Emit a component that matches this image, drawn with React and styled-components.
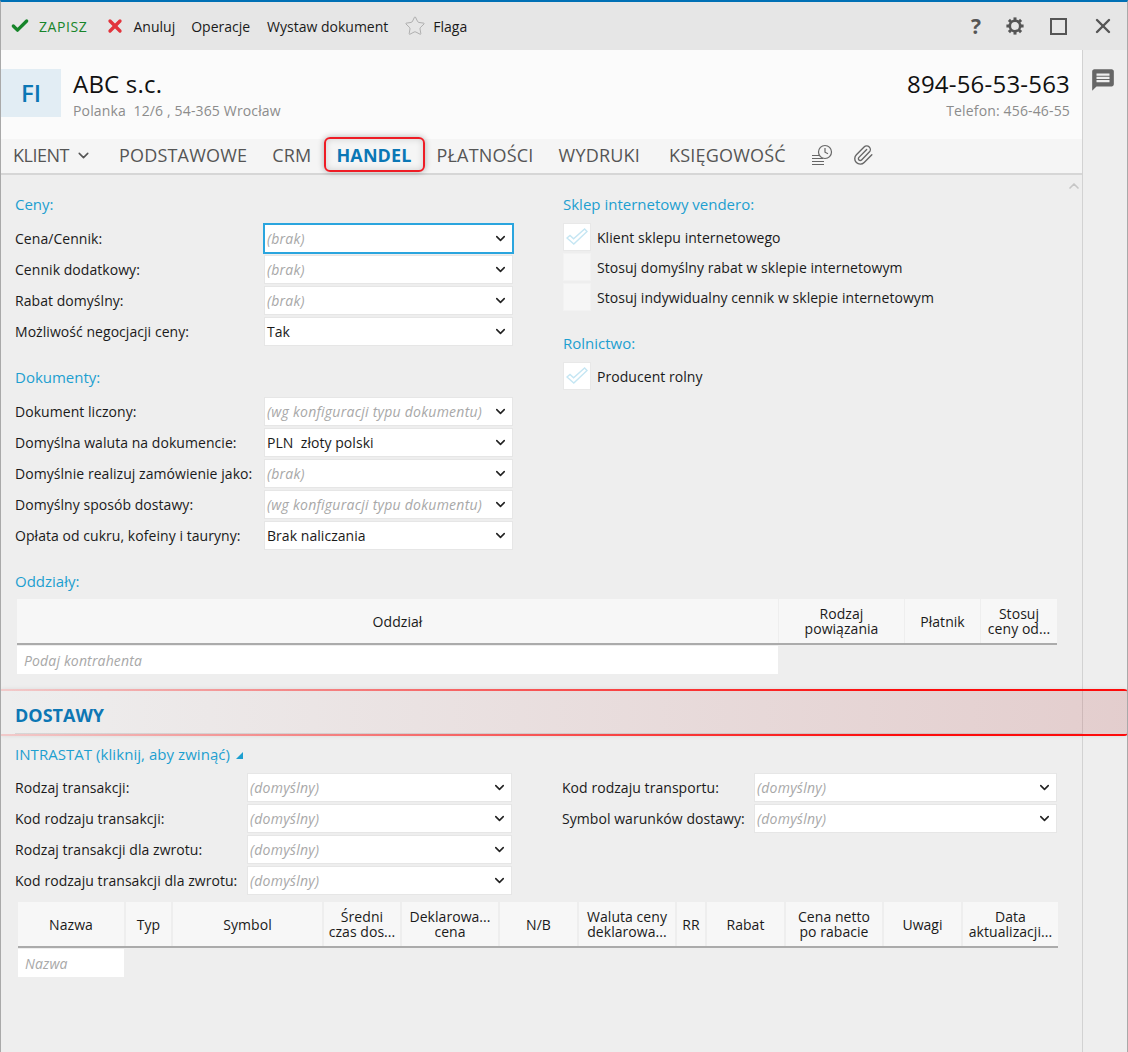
import React from "react";
import styled, { createGlobalStyle } from "styled-components";
import { Check, X, Star, ChevronDown, ChevronUp, Paperclip } from "lucide-react";
import { MdMessage } from "react-icons/md";

const GlobalStyle = createGlobalStyle`
  html, body {
    margin: 0;
    padding: 0;
    background: #eeeeee;
  }
  * {
    box-sizing: border-box;
  }
`;

const Window = styled.div`
  width: 1128px;
  height: 1052px;
  display: flex;
  flex-direction: column;
  overflow: hidden;
  background: #eeeeee;
  border-top: 2px solid #0070b5;
  border-left: 1px solid #a9a9a9;
  border-right: 1px solid #a9a9a9;
  font-family: "Open Sans", "Noto Sans", sans-serif;
  font-size: 14px;
  letter-spacing: 0.05px;
  color: #1a1a1a;
`;

const Toolbar = styled.div`
  height: 48px;
  flex: none;
  display: flex;
  align-items: center;
  padding: 0 12px 0 9px;
  background: #e6e6e6;
`;

const ToolButton = styled.div`
  display: flex;
  align-items: center;
  gap: ${(p) => p.$gap || 0}px;
  margin-right: ${(p) => p.$right || 16}px;
  color: ${(p) => p.$color || "#1a1a1a"};
  letter-spacing: ${(p) => p.$spacing || 0}px;
`;

const ToolSpacer = styled.div`
  flex: 1;
`;

const WindowIcon = styled.div`
  width: 24px;
  height: 24px;
  margin-left: ${(p) => p.$left || 0}px;
  display: flex;
  align-items: center;
  justify-content: center;
  color: #555555;
  font-size: 21px;
  font-weight: 700;
`;

const MaximizeBox = styled.div`
  width: 17px;
  height: 17px;
  border: 2px solid #555555;
`;

const Body = styled.div`
  flex: 1;
  display: flex;
  min-height: 0;
`;

const Main = styled.div`
  width: 1081px;
  flex: none;
`;

const Sidebar = styled.div`
  flex: 1;
  border-left: 1px solid #d2d2d2;
  padding: 17px 0 0 7px;
  color: #666666;
`;

const Header = styled.div`
  height: 89px;
  display: flex;
  align-items: flex-start;
  padding: 19px 12px 0 0;
  background: #fbfbfb;
`;

const Avatar = styled.div`
  width: 60px;
  height: 48px;
  padding-bottom: 2px;
  display: flex;
  align-items: center;
  justify-content: center;
  background: #e2edf4;
  color: #0b77b5;
  font-size: 24px;
  font-weight: 600;
`;

const Company = styled.div`
  flex: 1;
  margin-left: 12px;
`;

const HeaderRight = styled.div`
  text-align: right;
`;

const BigText = styled.div`
  font-size: 24px;
  line-height: 30px;
  letter-spacing: 0.2px;
  color: #111111;
`;

const SubText = styled.div`
  font-size: 14px;
  line-height: 20px;
  margin-top: 2px;
  letter-spacing: 0.15px;
  color: #8c8c8c;
  white-space: pre;
`;

const Tabs = styled.div`
  height: 36px;
  display: flex;
  align-items: center;
  padding: 0 0 2px 12px;
  background: #f5f5f5;
  border-bottom: 2px solid #d6d6d6;
  font-size: 18px;
  letter-spacing: 0.2px;
`;

const Tab = styled.div`
  position: relative;
  display: flex;
  align-items: center;
  gap: 6px;
  margin-right: ${(p) => p.$right || 25}px;
  color: ${(p) => (p.$active ? "#0b77b5" : "#555555")};
  font-weight: ${(p) => (p.$active ? 700 : 400)};
  letter-spacing: ${(p) => (p.$active ? "0.1px" : "inherit")};

  ${(p) =>
    p.$active &&
    `
    &::after {
      content: "";
      position: absolute;
      left: -12px;
      right: -14px;
      top: -6px;
      bottom: -5px;
      border: 2px solid #ee1c25;
      border-radius: 6px;
      box-shadow: 0 0 6px rgba(0, 0, 0, 0.3), inset 0 0 7px rgba(0, 0, 0, 0.15);
    }
  `}
`;

const TabLabel = styled.span`
  letter-spacing: -0.5px;
`;

const TabIcon = styled.div`
  display: flex;
  margin-right: ${(p) => p.$right || 20}px;
  color: #666666;
`;

const Content = styled.div`
  position: relative;
  padding: 19px 0 0 14px;
`;

const ScrollUp = styled.div`
  position: absolute;
  right: 0;
  top: 3px;
  color: #c6c6c6;
`;

const Columns = styled.div`
  display: flex;
  gap: 50px;
`;

const Column = styled.div`
  width: ${(p) => p.$width}px;
`;

const Heading = styled.div`
  height: 20px;
  line-height: 20px;
  margin-top: ${(p) => p.$top || 0}px;
  margin-bottom: ${(p) => p.$bottom ?? 10}px;
  color: #1d9fd0;
  font-size: 15px;
  letter-spacing: 0;
`;

const Row = styled.div`
  display: grid;
  grid-template-columns: ${(p) => p.$label}px 1fr;
  align-items: center;
  height: 29px;
  margin-bottom: 2px;
  white-space: nowrap;
`;

const SelectBox = styled.div`
  height: 29px;
  display: flex;
  align-items: center;
  justify-content: space-between;
  padding: 0 4px 0 2px;
  background: #ffffff;
  border: 1px solid ${(p) => (p.$focused ? "#2aa5de" : "#e6e6e6")};
  box-shadow: ${(p) => (p.$focused ? "0 0 0 1px #2aa5de" : "none")};
  color: ${(p) => (p.$muted ? "#a8a8a8" : "#1a1a1a")};
  font-style: ${(p) => (p.$muted ? "italic" : "normal")};
  letter-spacing: ${(p) => (p.$muted ? "0.25px" : "inherit")};
  white-space: pre;
`;

const CheckRow = styled.div`
  display: flex;
  align-items: center;
  gap: 6px;
  height: 28px;
  margin-bottom: 2px;
  white-space: nowrap;
`;

const CheckBox = styled.div`
  width: 28px;
  height: 28px;
  display: flex;
  align-items: center;
  justify-content: center;
  background: ${(p) => (p.$checked ? "#ffffff" : "#f6f6f6")};
  border: 1px solid ${(p) => (p.$checked ? "#e8e8e8" : "#f2f2f2")};
`;

const TableHead = styled.div`
  display: grid;
  grid-template-columns: ${(p) => p.$columns};
  gap: ${(p) => p.$gap}px;
  width: ${(p) => p.$width}px;
  margin-left: ${(p) => p.$left}px;
  margin-top: ${(p) => p.$top}px;
  border-bottom: 2px solid #ababab;
`;

const HeadCell = styled.div`
  height: 44px;
  display: flex;
  align-items: center;
  justify-content: center;
  background: #f7f7f7;
  text-align: center;
  line-height: 15px;
  white-space: pre-line;
`;

const FilterCell = styled.div`
  width: ${(p) => p.$width}px;
  height: 28px;
  margin: 1px 0 0 ${(p) => p.$left}px;
  padding-left: 7px;
  display: flex;
  align-items: center;
  background: #ffffff;
  color: #a8a8a8;
  font-style: italic;
  letter-spacing: 0.15px;
`;

const SectionTitle = styled.div`
  position: relative;
  height: 46px;
  margin: 15px 0 9px -14px;
  padding: 15px 0 0 14px;
  line-height: 22px;
  font-size: 18px;
  font-weight: 700;
  letter-spacing: 0;
  color: #0b77b5;

  &::before {
    content: "";
    position: absolute;
    left: 14px;
    right: 0;
    bottom: 1px;
    height: 1px;
    background: #d6d6d6;
  }

  &::after {
    content: "";
    position: absolute;
    left: 0;
    right: -46px;
    top: 0;
    bottom: -1px;
    border-right: 1px solid #ee1c25;
    border-radius: 0 4px 4px 0;
    background:
      linear-gradient(90deg, rgba(255, 60, 60, 0.2), rgba(255, 0, 0, 0.95) 80%) top / 100% 2px no-repeat,
      linear-gradient(90deg, rgba(255, 60, 60, 0.2), rgba(255, 0, 0, 0.95) 80%) bottom / 100% 2px no-repeat,
      linear-gradient(90deg, rgba(190, 90, 90, 0), rgba(190, 90, 90, 0.22));
    box-shadow: 0 0 4px rgba(0, 0, 0, 0.08);
  }
`;

const Collapser = styled.div`
  display: flex;
  align-items: center;
  gap: 6px;
  height: 20px;
  margin: 1px 0 9px;
  color: #1d9fd0;
  font-size: 15px;
`;

const Triangle = styled.span`
  width: 0;
  height: 0;
  margin-top: 3px;
  border-style: solid;
  border-width: 0 0 7px 7px;
  border-color: transparent transparent #1d9fd0 transparent;
`;

function Select({ value, muted, focused }) {
  return (
    <SelectBox $muted={muted} $focused={focused}>
      <span>{value}</span>
      <ChevronDown size={15} strokeWidth={2.5} color="#222" />
    </SelectBox>
  );
}

function GearIcon() {
  const teeth = [0, 45, 90, 135, 180, 225, 270, 315];
  return (
    <svg width="20" height="20" viewBox="0 0 20 20" fill="none" stroke="#555" strokeWidth="2.6">
      <circle cx="10" cy="10" r="5.2" />
      {teeth.map((angle) => (
        <path key={angle} d="M10 1.4v3" strokeWidth="3" transform={`rotate(${angle} 10 10)`} />
      ))}
    </svg>
  );
}

function HistoryIcon() {
  return (
    <svg width="22" height="22" viewBox="0 0 22 22" fill="none" stroke="#666" strokeWidth="1.2">
      <circle cx="14" cy="8" r="6.5" />
      <path d="M14 4v4.2l3 1.5" />
      <path d="M1 11.5h7M1 14.5h11M1 17.5h12M1 20.5h12" />
    </svg>
  );
}

function Tick() {
  return (
    <svg width="22" height="18" viewBox="0 0 22 18" fill="none" stroke="#c5e6f3" strokeWidth="1.4">
      <path d="M1 10l3-2.6 3.6 3.4L18.6 1l2.4 2.4L7.8 16z" />
    </svg>
  );
}

const priceRows = [
  { label: "Cena/Cennik:", value: "(brak)", muted: true, focused: true },
  { label: "Cennik dodatkowy:", value: "(brak)", muted: true },
  { label: "Rabat domyślny:", value: "(brak)", muted: true },
  { label: "Możliwość negocjacji ceny:", value: "Tak" },
];

const documentRows = [
  { label: "Dokument liczony:", value: "(wg konfiguracji typu dokumentu)", muted: true },
  { label: "Domyślna waluta na dokumencie:", value: "PLN  złoty polski" },
  { label: "Domyślnie realizuj zamówienie jako:", value: "(brak)", muted: true },
  { label: "Domyślny sposób dostawy:", value: "(wg konfiguracji typu dokumentu)", muted: true },
  { label: "Opłata od cukru, kofeiny i tauryny:", value: "Brak naliczania" },
];

const shopChecks = [
  { label: "Klient sklepu internetowego", checked: true },
  { label: "Stosuj domyślny rabat w sklepie internetowym" },
  { label: "Stosuj indywidualny cennik w sklepie internetowym" },
];

const intrastatLeft = [
  "Rodzaj transakcji:",
  "Kod rodzaju transakcji:",
  "Rodzaj transakcji dla zwrotu:",
  "Kod rodzaju transakcji dla zwrotu:",
];

const intrastatRight = ["Kod rodzaju transportu:", "Symbol warunków dostawy:"];

const branchColumns = ["Oddział", "Rodzaj\npowiązania", "Płatnik", "Stosuj\nceny od..."];

const deliveryColumns = [
  "Nazwa",
  "Typ",
  "Symbol",
  "Średni\nczas dos...",
  "Deklarowa...\ncena",
  "N/B",
  "Waluta ceny\ndeklarowa...",
  "RR",
  "Rabat",
  "Cena netto\npo rabacie",
  "Uwagi",
  "Data\naktualizacji...",
];

const tabs = [
  { name: "PODSTAWOWE" },
  { name: "CRM" },
  { name: "HANDEL", active: true },
  { name: "PŁATNOŚCI" },
  { name: "WYDRUKI", right: 29 },
  { name: "KSIĘGOWOŚĆ" },
];

export default function App() {
  return (
    <>
      <GlobalStyle />
      <Window>
        <Toolbar>
          <ToolButton $gap={9} $color="#17852a" $right={17} $spacing={0.6}>
            <Check size={20} strokeWidth={4} color="#17852a" />
            ZAPISZ
          </ToolButton>
          <ToolButton $gap={9}>
            <X size={20} strokeWidth={4} color="#e2343c" />
            Anuluj
          </ToolButton>
          <ToolButton $right={17}>Operacje</ToolButton>
          <ToolButton>Wystaw dokument</ToolButton>
          <ToolButton $gap={7}>
            <Star size={22} strokeWidth={1} color="#a8a8a8" />
            Flaga
          </ToolButton>
          <ToolSpacer />
          <WindowIcon>?</WindowIcon>
          <WindowIcon $left={15}>
            <GearIcon />
          </WindowIcon>
          <WindowIcon $left={19}>
            <MaximizeBox />
          </WindowIcon>
          <WindowIcon $left={21}>
            <X size={24} strokeWidth={2.4} />
          </WindowIcon>
        </Toolbar>
        <Body>
          <Main>
            <Header>
              <Avatar>FI</Avatar>
              <Company>
                <BigText>ABC s.c.</BigText>
                <SubText>Polanka  12/6 , 54-365 Wrocław</SubText>
              </Company>
              <HeaderRight>
                <BigText>894-56-53-563</BigText>
                <SubText>Telefon: 456-46-55</SubText>
              </HeaderRight>
            </Header>
            <Tabs>
              <Tab $right={27}>
                <TabLabel>KLIENT</TabLabel>
                <ChevronDown size={17} strokeWidth={2.2} />
              </Tab>
              {tabs.map((tab) => (
                <Tab key={tab.name} $active={tab.active} $right={tab.right}>
                  {tab.name}
                </Tab>
              ))}
              <TabIcon $right={19}>
                <HistoryIcon />
              </TabIcon>
              <TabIcon>
                <Paperclip size={22} strokeWidth={1.5} />
              </TabIcon>
            </Tabs>
            <Content>
              <ScrollUp>
                <ChevronUp size={16} strokeWidth={2.5} />
              </ScrollUp>
              <Columns>
                <Column $width={498}>
                  <Heading>Ceny:</Heading>
                  {priceRows.map((row) => (
                    <Row key={row.label} $label={249}>
                      {row.label}
                      <Select value={row.value} muted={row.muted} focused={row.focused} />
                    </Row>
                  ))}
                  <Heading $top={21}>Dokumenty:</Heading>
                  {documentRows.map((row) => (
                    <Row key={row.label} $label={249}>
                      {row.label}
                      <Select value={row.value} muted={row.muted} />
                    </Row>
                  ))}
                </Column>
                <Column $width={500}>
                  <Heading $bottom={9}>Sklep internetowy vendero:</Heading>
                  {shopChecks.map((item) => (
                    <CheckRow key={item.label}>
                      <CheckBox $checked={item.checked}>{item.checked && <Tick />}</CheckBox>
                      {item.label}
                    </CheckRow>
                  ))}
                  <Heading $top={22} $bottom={9}>
                    Rolnictwo:
                  </Heading>
                  <CheckRow>
                    <CheckBox $checked>
                      <Tick />
                    </CheckBox>
                    Producent rolny
                  </CheckRow>
                </Column>
              </Columns>
              <Heading $top={19} $bottom={0}>
                Oddziały:
              </Heading>
              <TableHead $columns="761px 125px 75px 76px" $gap={1} $width={1040} $left={2} $top={8}>
                {branchColumns.map((name) => (
                  <HeadCell key={name}>{name}</HeadCell>
                ))}
              </TableHead>
              <FilterCell $width={761} $left={2}>
                Podaj kontrahenta
              </FilterCell>
              <SectionTitle>DOSTAWY</SectionTitle>
              <Collapser>
                INTRASTAT (kliknij, aby zwinąć)
                <Triangle />
              </Collapser>
              <Columns>
                <Column $width={497}>
                  {intrastatLeft.map((label) => (
                    <Row key={label} $label={232}>
                      {label}
                      <Select value="(domyślny)" muted />
                    </Row>
                  ))}
                </Column>
                <Column $width={495}>
                  {intrastatRight.map((label) => (
                    <Row key={label} $label={192}>
                      {label}
                      <Select value="(domyślny)" muted />
                    </Row>
                  ))}
                </Column>
              </Columns>
              <TableHead
                $columns="106px 45px 149px 76px 96px 77px 96px 28px 77px 96px 77px 95px"
                $gap={2}
                $width={1040}
                $left={3}
                $top={5}
              >
                {deliveryColumns.map((name) => (
                  <HeadCell key={name}>{name}</HeadCell>
                ))}
              </TableHead>
              <FilterCell $width={106} $left={3}>
                Nazwa
              </FilterCell>
            </Content>
          </Main>
          <Sidebar>
            <MdMessage size={26} />
          </Sidebar>
        </Body>
      </Window>
    </>
  );
}
